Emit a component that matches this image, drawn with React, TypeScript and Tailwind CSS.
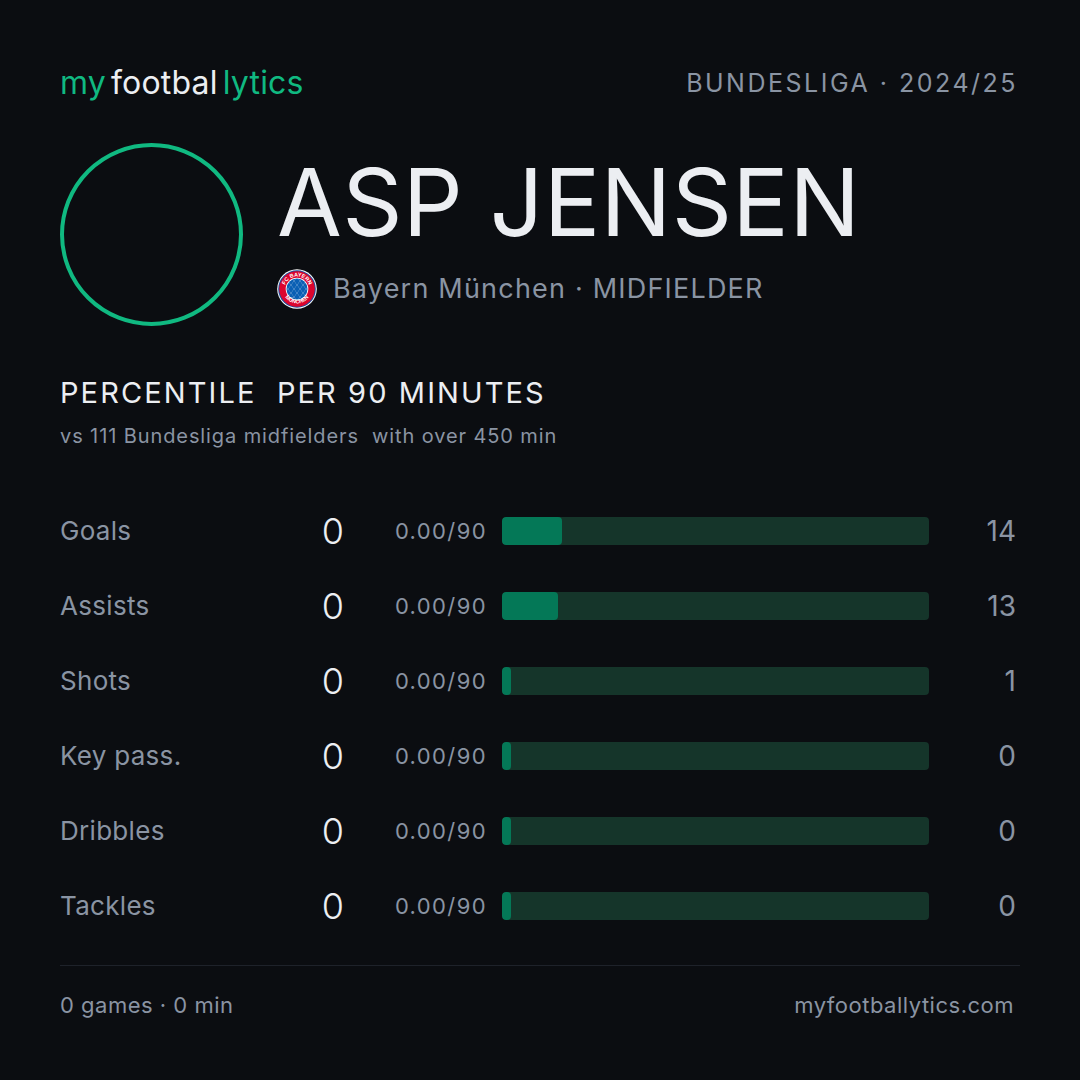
import React from "react";

const rows = [
  { label: "Goals", value: "0", per: "0.00/90", pct: 14 },
  { label: "Assists", value: "0", per: "0.00/90", pct: 13 },
  { label: "Shots", value: "0", per: "0.00/90", pct: 1 },
  { label: "Key pass.", value: "0", per: "0.00/90", pct: 0 },
  { label: "Dribbles", value: "0", per: "0.00/90", pct: 0 },
  { label: "Tackles", value: "0", per: "0.00/90", pct: 0 },
];

function Crest() {
  const lozenges: React.ReactNode[] = [];
  const s = 4;
  for (let i = -4; i <= 4; i++) {
    for (let j = -4; j <= 4; j++) {
      if ((i + j) % 2 === 0) {
        const cx = 20 + i * s * 0.75;
        const cy = 20 + j * s;
        lozenges.push(
          <polygon
            key={`${i}-${j}`}
            points={`${cx},${cy - s} ${cx + s * 0.75},${cy} ${cx},${cy + s} ${cx - s * 0.75},${cy}`}
            fill="#0a5fb4"
          />
        );
      }
    }
  }
  return (
    <svg width="40" height="40" viewBox="0 0 40 40">
      <defs>
        <clipPath id="inner">
          <circle cx="20" cy="20" r="10.5" />
        </clipPath>
        <path id="topArc" d="M7.5,20 A12.5,12.5 0 0,1 32.5,20" />
        <path id="botArc" d="M5.6,20 A14.4,14.4 0 0,0 34.4,20" />
      </defs>
      <circle cx="20" cy="20" r="19.8" fill="#ffffff" />
      <circle cx="20" cy="20" r="18.8" fill="#1c4f9c" />
      <circle cx="20" cy="20" r="17.8" fill="#dc052d" />
      <circle cx="20" cy="20" r="11.3" fill="#ffffff" />
      <g clipPath="url(#inner)">
        <rect x="0" y="0" width="40" height="40" fill="#ffffff" />
        {lozenges}
      </g>
      <text fontSize="5.4" fill="#ffffff" fontFamily="Liberation Sans, sans-serif" fontWeight="700">
        <textPath href="#topArc" startOffset="50%" textAnchor="middle">FC BAYERN</textPath>
      </text>
      <text fontSize="5.4" fill="#ffffff" fontFamily="Liberation Sans, sans-serif" fontWeight="700">
        <textPath href="#botArc" startOffset="50%" textAnchor="middle">MÜNCHEN</textPath>
      </text>
    </svg>
  );
}

export default function App() {
  return (
    <div
      className="w-[1080px] h-[1080px] bg-[#0b0d11] text-[#e8eaee] px-[60px] flex flex-col"
      style={{ fontFamily: "Inter, 'Noto Sans', sans-serif" }}
    >
      {/* Header */}
      <div className="flex items-center justify-between pt-[63px] h-[103px]">
        <div className="text-[32px] leading-none tracking-[0.2px] flex gap-[5px]">
          <span className="text-[#10b981]">my</span>
          <span className="text-[#eceef2]">footbal</span>
          <span className="text-[#10b981]">lytics</span>
        </div>
        <div className="text-[25px] leading-none tracking-[2.5px] text-[#8a94a3] mr-[2px]">
          BUNDESLIGA · 2024/25
        </div>
      </div>

      {/* Player */}
      <div className="flex items-center gap-[34px] mt-[40px]">
        <div className="w-[183px] h-[183px] rounded-full border-[4px] border-[#10b981] shrink-0" />
        <div className="flex flex-col">
          <div className="text-[94px] leading-none tracking-[0.3px] text-[#eceef2] mt-[-6px]">ASP JENSEN</div>
          <div className="flex items-center gap-[16px] mt-[20px]">
            <Crest />
            <div className="text-[27px] leading-none text-[#8a94a3] tracking-[1.2px]">
              Bayern München · MIDFIELDER
            </div>
          </div>
        </div>
      </div>

      {/* Section title */}
      <div className="mt-[52px]">
        <div className="text-[29px] leading-none tracking-[2.1px] text-[#eceef2]">PERCENTILE&nbsp; PER 90 MINUTES</div>
        <div className="text-[20px] leading-none text-[#8a94a3] mt-[19px] tracking-[0.9px]">
          vs 111 Bundesliga midfielders&nbsp; with over 450 min
        </div>
      </div>

      {/* Rows */}
      <div className="flex flex-col mt-[47px]">
        {rows.map((r) => (
          <div key={r.label} className="flex items-center h-[75px]">
            <div className="w-[240px] text-[26px] leading-none text-[#8a94a3] tracking-[0.3px]">{r.label}</div>
            <div className="w-[44px] text-[36px] leading-none text-[#eceef2] font-light text-right">{r.value}</div>
            <div className="w-[143px] text-[22px] leading-none text-[#8a94a3] text-right tracking-[1.4px]">{r.per}</div>
            <div className="ml-[15px] w-[427px] h-[28px] rounded-[4px] bg-[#15352a] overflow-hidden">
              <div
                className="h-full rounded-[4px] bg-[#047857]"
                style={{ width: `${Math.max(9, (r.pct / 100) * 427)}px` }}
              />
            </div>
            <div className="flex-1 text-right text-[28px] leading-none text-[#8a94a3] pr-[4px]">{r.pct}</div>
          </div>
        ))}
      </div>

      {/* Footer */}
      <div className="mt-[22px] border-t border-[#1e222a]" />
      <div className="flex justify-between items-center mt-[28px] text-[22px] leading-none text-[#8a94a3] tracking-[0.5px]">
        <div>0 games · 0 min</div>
        <div className="pr-[6px]">myfootballytics.com</div>
      </div>
    </div>
  );
}
